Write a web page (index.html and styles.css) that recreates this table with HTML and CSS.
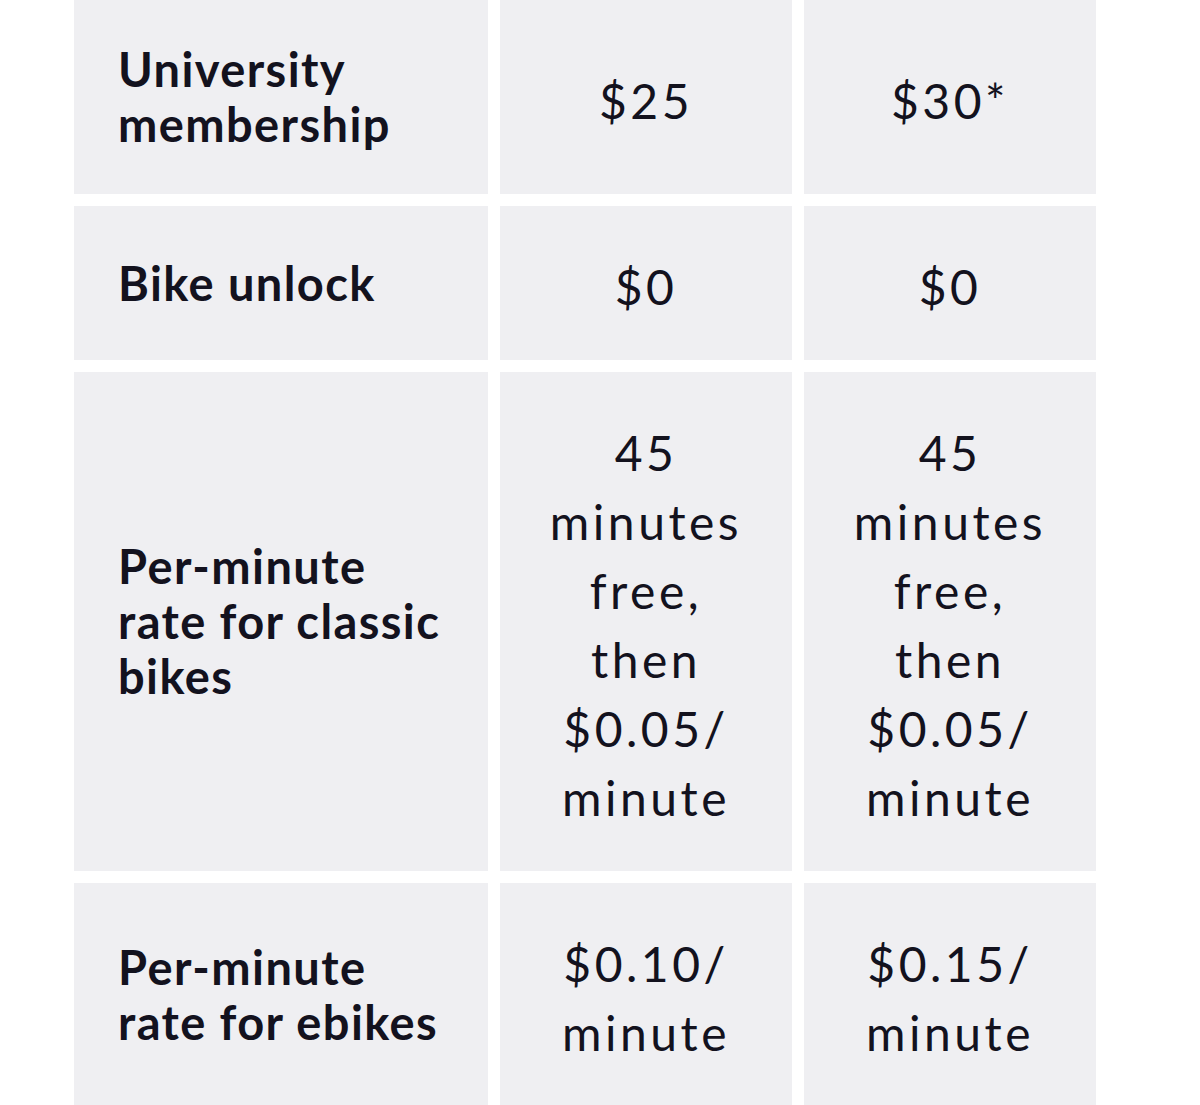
FILE: index.html
```html
<!DOCTYPE html>
<html lang="en">
<head>
<meta charset="utf-8">
<title>Pricing</title>
<link rel="stylesheet" href="styles.css">
</head>
<body>
<div class="pricing">
  <div class="cell label">University membership</div>
  <div class="cell value">$25</div>
  <div class="cell value">$30*</div>

  <div class="cell label">Bike unlock</div>
  <div class="cell value">$0</div>
  <div class="cell value">$0</div>

  <div class="cell label">Per-minute rate for classic bikes</div>
  <div class="cell value">45 minutes free, then $0.05/ minute</div>
  <div class="cell value">45 minutes free, then $0.05/ minute</div>

  <div class="cell label">Per-minute rate for ebikes</div>
  <div class="cell value">$0.10/ minute</div>
  <div class="cell value">$0.15/ minute</div>
</div>
</body>
</html>
```

FILE: styles.css
```css
html, body {
  margin: 0;
  padding: 0;
  background: #ffffff;
}

body {
  font-family: "Lato", "Liberation Sans", sans-serif;
  color: #13121e;
}

.pricing {
  display: grid;
  grid-template-columns: 414px 292px 292px;
  gap: 12px;
  margin-left: 74px;
}

.cell {
  background: #efeff2;
  padding: 42px 44px;
  display: flex;
  align-items: center;
}

.label {
  font-weight: 700;
  font-size: 47px;
  line-height: 55px;
  letter-spacing: 1.4px;
  padding-right: 34px;
}

.value {
  justify-content: center;
  text-align: center;
  font-weight: 400;
  font-size: 48px;
  line-height: 69px;
  letter-spacing: 3.5px;
  padding: 46px 36px 39px;
}
```
